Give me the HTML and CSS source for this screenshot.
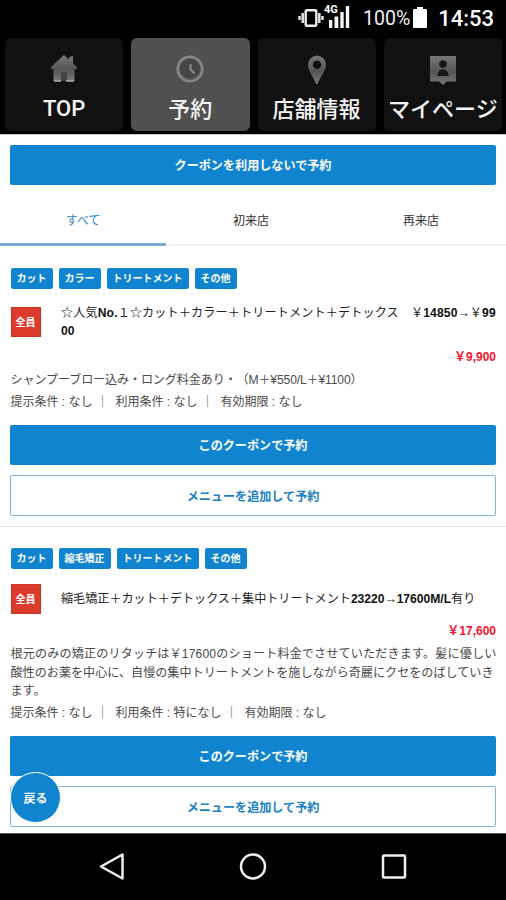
FILE: index.html
```html
<!DOCTYPE html>
<html lang="ja">
<head>
<meta charset="utf-8">
<title>予約</title>
<link rel="stylesheet" href="styles.css">
</head>
<body>
<div class="screen">
  <header class="status">
    <svg class="vibrate" width="26" height="20" viewBox="0 0 26 20"><rect x="7.7" y="2.2" width="10.6" height="15.6" rx="1" fill="none" stroke="#eee" stroke-width="2.4"/><path d="M4.7 5v10M21.3 5v10M1.5 8v4M24.5 8v4" stroke="#ddd" stroke-width="2.6" fill="none"/></svg>
    <span class="signal"><svg width="22" height="24" viewBox="0 0 22 24"><path d="M1 15h3.3v8H1zM6.5 11.5h3.8V23H6.5zM12.3 7h3.4v16h-3.4zM17.8 1h3.4v22h-3.4z" fill="#f4f4f4"/></svg><span class="net">4G</span></span>
    <span class="percent">100%</span>
    <svg class="battery" width="14" height="21" viewBox="0 0 14 21"><path d="M4 0h6v2h3a1 1 0 0 1 1 1v17a1 1 0 0 1-1 1H1a1 1 0 0 1-1-1V3a1 1 0 0 1 1-1h3z" fill="#fff"/></svg>
    <span class="clock">14:53</span>
  </header>
  <nav class="nav">
    <a class="nav-item"><svg width="28" height="30" viewBox="0 0 28 30"><defs><linearGradient id="g" x1="0" y1="0" x2="0" y2="1"><stop offset="0" stop-color="#777"/><stop offset=".55" stop-color="#555"/><stop offset="1" stop-color="#777"/></linearGradient></defs><path d="M14 1l5 4.5V3h2V2h2v7.5l4 3.5v2h-2.5v12h-21V15H1v-2z" fill="url(#g)"/><path d="M11 27v-9h6v9" fill="#444"/><path d="M4 27h7M16 27h8" stroke="#aaa" stroke-width="1.5"/></svg><span class="latin">TOP</span></a>
    <a class="nav-item active"><svg width="28" height="30" viewBox="0 0 28 30"><circle cx="14" cy="15" r="12.2" fill="none" stroke="#858585" stroke-width="2.8"/><circle cx="14" cy="15" r="10" fill="#454545"/><path d="M6 21a10 10 0 0 0 16 0" fill="none" stroke="#5d5d5d" stroke-width="1.5"/><path d="M14.5 10v5.5l4 4" fill="none" stroke="#888" stroke-width="2.2"/></svg><span>予約</span></a>
    <a class="nav-item"><svg width="28" height="30" viewBox="0 0 28 30"><path fill-rule="evenodd" d="M14 1.5a9 9 0 0 0-9 9C5 17 10 22 13 30h1.5c3-8 8.500-13 8.500-19.500A9 9 0 0 0 14 1.500zm0 5a4.200 4.200 0 1 1 0 8.400 4.200 4.200 0 0 1 0-8.400z" fill="url(#g)"/></svg><span>店舗情報</span></a>
    <a class="nav-item"><svg width="28" height="30" viewBox="0 0 28 30"><path d="M1 2h26v25.500H18L14 31l-4-3.500H1z" fill="url(#g)"/><circle cx="14" cy="10" r="3.800" fill="#171717"/><path d="M8.500 22c0-9 11-9 11 0z" fill="#171717"/></svg><span>マイページ</span></a>
  </nav>
  <main class="page">
    <a class="btn">クーポンを利用しないで予約</a>
    <div class="tabs"><span class="tab current">すべて</span><span class="tab">初来店</span><span class="tab">再来店</span></div>
    <section class="coupon">
      <div class="tags"><span>カット</span><span>カラー</span><span>トリートメント</span><span>その他</span></div>
      <div class="head"><span class="badge">全員</span><h2 class="wide">☆人気<b>No.</b>１☆カット＋カラー＋トリートメント＋デトックス　￥<b>14850</b>→￥<b>99</b><br><b>00</b></h2></div>
      <p class="price">￥9,900</p>
      <p class="desc tight">シャンプーブロー込み・ロング料金あり・（M＋¥550/L＋¥1100）</p>
      <p class="terms"><span>提示条件 : なし</span><i>｜</i><span>利用条件 : なし</span><i>｜</i><span>有効期限 : なし</span></p>
      <a class="btn">このクーポンで予約</a>
      <a class="btn outline">メニューを追加して予約</a>
    </section>
    <section class="coupon">
      <div class="tags"><span>カット</span><span>縮毛矯正</span><span>トリートメント</span><span>その他</span></div>
      <div class="head"><span class="badge">全員</span><h2>縮毛矯正＋カット＋デトックス＋集中トリートメント<b>23220</b>→<b>17600M/L</b>有り</h2></div>
      <p class="price">￥17,600</p>
      <p class="desc"><span class="wide">根元のみの矯正のリタッチは￥17600のショート料金でさせていただきます。髪に優しい</span><br>酸性のお薬を中心に、自慢の集中トリートメントを施しながら奇麗にクセをのばしていき<br>ます。</p>
      <p class="terms"><span>提示条件 : なし</span><i>｜</i><span>利用条件 : 特になし</span><i>｜</i><span>有効期限 : なし</span></p>
      <a class="btn">このクーポンで予約</a>
      <a class="btn outline">メニューを追加して予約</a>
    </section>
    <a class="back">戻る</a>
  </main>
  <footer class="system">
    <svg width="28" height="30" viewBox="0 0 28 30"><path d="M24.5 2.5v24L3 14.5z" fill="none" stroke="#eee" stroke-width="2.5" stroke-linejoin="round"/></svg>
    <svg width="28" height="30" viewBox="0 0 28 30"><circle cx="14" cy="14.5" r="12" fill="none" stroke="#eee" stroke-width="2.5"/></svg>
    <svg width="28" height="30" viewBox="0 0 28 30"><rect x="3" y="3.5" width="22" height="22" rx="1" fill="none" stroke="#eee" stroke-width="2.5"/></svg>
  </footer>
</div>
</body>
</html>
```

FILE: styles.css
```css
* { box-sizing: border-box; }
body { margin: 0; background: #000; font-family: "Liberation Sans", "Noto Sans CJK JP", sans-serif; text-spacing-trim: space-all; }
.screen { width: 506px; height: 900px; display: flex; flex-direction: column; overflow: hidden; background: #000; }

.status { height: 38px; flex: none; display: flex; align-items: center; justify-content: flex-end; padding-right: 12px; color: #eee; font-family: Roboto, sans-serif; }
.vibrate { margin-right: 4px; margin-top: -3px; }
.signal { position: relative; width: 22px; height: 24px; margin-top: -5px; margin-right: 13px; }
.net { position: absolute; left: -4px; top: -1px; font-size: 11px; line-height: 12px; font-weight: 700; color: #fff; text-shadow: 0 0 2px #000, 0 0 2px #000; }
.percent { font-size: 19.5px; line-height: 24px; margin: -1px 3px 0 0; }
.battery { margin-right: 11px; margin-top: -4px; }
.clock { font-size: 22px; line-height: 24px; margin-top: -1px; font-weight: 500; color: #fff; }

.nav { height: 97px; flex: none; display: flex; gap: 8px; padding: 0 4px 3px 5px; border-bottom: 1px solid #c9c9c9; }
.nav-item { flex: 1 1 0; min-width: 0; display: flex; flex-direction: column; align-items: center; padding-top: 16px; background: #111; border-radius: 6px; color: #f4f4f4; font: 500 22px/30px "Noto Sans CJK JP", sans-serif; white-space: nowrap; }
.nav-item svg { width: 28px; height: 30px; overflow: visible; margin-bottom: 8px; }
.nav-item.active { background: #505050; }
.nav-item .latin { font-family: Roboto, sans-serif; padding-top: 2px; }

.page { position: relative; flex: none; height: 698px; background: #fff; padding-top: 10px; overflow: hidden; }
.btn { display: flex; align-items: center; justify-content: center; height: 40px; margin: 0 10px; border-radius: 2px; background: #1184d0; color: #fff; font: 700 12.1px/18px "Noto Sans CJK JP", sans-serif; }
.btn.outline { height: 41px; margin-top: 10px; background: #fff; color: #1b7fc4; border: 1px solid #84b4dd; }

.tabs { display: flex; height: 61px; width: 506px; }
.tab { flex: 1 1 0; padding-top: 26px; text-align: center; color: #333; border-bottom: 2px solid #f0f0f0; font: 12px/18px "Noto Sans CJK JP", sans-serif; }
.tab.current { flex: 0 0 166px; color: #3185c9; border-bottom: 3px solid #7ba9d8; }

.coupon { border-bottom: 1px solid #e8e8e8; padding: 22px 0 10px; height: 281px; }
.coupon + .coupon { height: 320px; padding-top: 21px; }
.tags { display: flex; gap: 6px; margin-left: 10.5px; }
.tags span { height: 21px; padding: 0 6px; border-radius: 2px; background: #1184d0; color: #fff; font: 700 10px/20px "Noto Sans CJK JP", sans-serif; }
.head { display: flex; align-items: center; margin: 15px 0 0 10.5px; }
.badge { flex: none; width: 30px; height: 30px; margin-right: 20.5px; background: #dc3b2b; border: 1px solid #cc3528; color: #fff; text-align: center; font: 700 10px/27px "Noto Sans CJK JP", sans-serif; }
h2 { margin: 0; color: #222; font-size: 12.1px; line-height: 18px; font-weight: 400; white-space: nowrap; }
h2 b { color: #111; }
.wide { letter-spacing: .145px; }
.tight { letter-spacing: -.14px; }
p { margin: 0; }
.price { margin: 8px 10px 0 0; text-align: right; color: #f5142f; font-size: 12px; line-height: 18px; font-weight: 700; }
.desc { margin: 5px 10px 0 10.5px; color: #4a4a4a; font-size: 12.1px; line-height: 18.5px; white-space: nowrap; }
.terms { display: flex; margin: 3px 0 14.5px 10.5px; color: #4a4a4a; font-size: 12px; line-height: 18px; white-space: nowrap; }
.terms i { width: 12px; margin: 0 7px 0 4px; font-style: normal; }
.back { position: absolute; left: 10px; top: 637px; width: 51px; height: 51px; border: 1px solid #fff; border-radius: 50%; background: #1184d0; color: #fff; text-align: center; font: 700 12px/49px "Noto Sans CJK JP", sans-serif; }

.system { flex: 1; display: flex; justify-content: center; gap: 113px; padding-top: 18px; border-top: 1px solid #555; }
.system svg { display: block; }
```
